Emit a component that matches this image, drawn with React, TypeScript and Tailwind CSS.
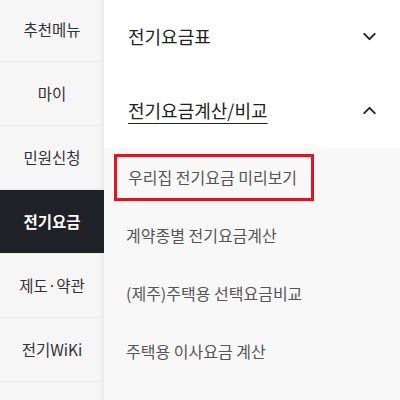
import { ChevronDown, ChevronUp } from "lucide-react";

const leftMenu = ["추천메뉴", "마이", "민원신청", "전기요금", "제도·약관", "전기WiKi", ""];
const subMenu = ["우리집 전기요금 미리보기", "계약종별 전기요금계산", "(제주)주택용 선택요금비교", "주택용 이사요금 계산"];

export default function App() {
  return (
    <div className="flex h-[400px] w-[400px] overflow-hidden bg-white font-['Noto_Sans_CJK_KR','Noto_Sans',sans-serif]">
      {/* 좌측 카테고리 */}
      <div className="relative w-[104px] shrink-0 bg-[#f6f6f6] shadow-[inset_-6px_0_6px_-4px_rgba(0,0,0,0.06)]">
        <ul className="-mt-[2px] flex flex-col">
          {leftMenu.map((label, i) => {
            const active = label === "전기요금";
            return (
              <li
                key={i}
                className={`flex h-[64px] shrink-0 items-center justify-center border-b border-[#ebebeb] text-[15.5px] ${
                  active ? "bg-[#202127] font-bold text-white" : "text-[#333]"
                }`}
              >
                {label}
              </li>
            );
          })}
        </ul>
      </div>

      {/* 우측 메뉴 */}
      <div className="flex flex-1 flex-col">
        <div className="flex h-[72px] items-center justify-between pl-[24px] pr-[20px]">
          <span className="text-[18px] text-[#222]">전기요금표</span>
          <ChevronDown className="h-[21px] w-[21px] text-[#222]" strokeWidth={2.2} />
        </div>
        <div className="flex h-[76px] items-center justify-between pl-[24px] pr-[20px]">
          <span className="text-[18px] text-[#222] underline underline-offset-[5px] decoration-1">
            전기요금계산/비교
          </span>
          <ChevronUp className="h-[21px] w-[21px] text-[#222]" strokeWidth={2.2} />
        </div>
        <ul className="flex flex-1 flex-col bg-[#f8f8f8]">
          {subMenu.map((label, i) => (
            <li key={label} className="flex h-[58px] items-center px-[10px]">
              <span
                className={`flex h-[47px] items-center px-[12px] text-[16px] text-[#555] ${
                  i === 0 ? "w-[200px] border-[3px] border-[#e3141f] pl-[11px]" : ""
                }`}
              >
                {label}
              </span>
            </li>
          ))}
        </ul>
      </div>
    </div>
  );
}
